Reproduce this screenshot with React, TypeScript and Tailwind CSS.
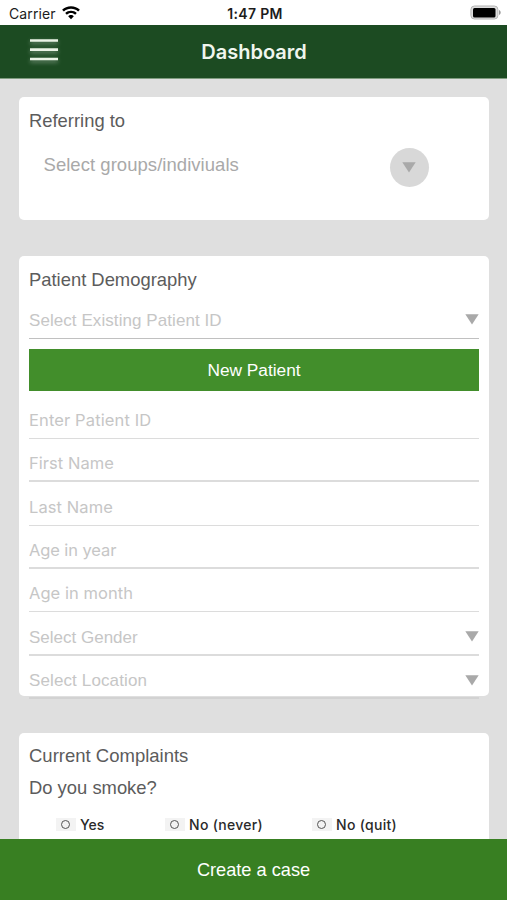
import { useState } from 'react';
import clsx from 'clsx';

const sans = "font-['Liberation_Sans',Arial,sans-serif]";
const inter = "font-['Inter',sans-serif]";

const textFields = [
  { label: 'Enter Patient ID', height: 'h-[43px] pt-[5px]', line: 'border-b border-[#dcdcdc]', tracking: 'tracking-[0.12px]' },
  { label: 'First Name', height: 'h-[43px] pt-[7px]', line: 'border-b-2 border-[#dcdcdc]', tracking: 'tracking-[0.05px]' },
  { label: 'Last Name', height: 'h-[44px] pt-[6px]', line: 'border-b border-[#dcdcdc]', tracking: 'tracking-[0.1px]' },
  { label: 'Age in year', height: 'h-[43px] pt-[6px]', line: 'border-b-2 border-[#dcdcdc]', tracking: 'tracking-[-0.1px]' },
  { label: 'Age in month', height: 'h-[43px] pt-[5px]', line: 'border-b border-[#dcdcdc]', tracking: 'tracking-[0.05px]' },
];

const smokeOptions = [
  { label: 'Yes', slot: 'ml-[27px] w-[109px]', tracking: 'tracking-[0.05px]' },
  { label: 'No (never)', slot: 'w-[147px]', tracking: 'tracking-[0.3px]' },
  { label: 'No (quit)', slot: 'w-[100px]', tracking: 'tracking-[0.3px]' },
];

function Triangle({ className }: { className?: string }) {
  return (
    <svg viewBox="0 0 14 11" className={clsx('h-[11px] w-[14px] shrink-0', className)}>
      <path d="M.3.300h13.400L7 10.600z" fill="#a9a9a9" />
    </svg>
  );
}

function StatusBar() {
  return (
    <div className={clsx('flex h-[25px] shrink-0 items-center bg-white text-[14px] leading-[25px] text-[#1c1c1c]', inter)}>
      <div className="flex flex-1 items-center pl-[9px]">
        <span className="pt-[2px] tracking-[0.12px]">Carrier</span>
        <svg viewBox="0 0 18 14" className="ml-[6px] h-[14px] w-[18px]" fill="#000">
          <path d="M9 .2C5.500.2 2.400 1.500.1 3.700L1.900 5.600C3.700 3.800 6.200 2.800 9 2.800s5.300 1 7.100 2.800l1.800-1.900C15.600 1.500 12.500.2 9 .2z" />
          <path d="M9 4.700c-2.300 0-4.300.9-5.800 2.300l1.700 1.800C6 7.700 7.400 7.100 9 7.100s3 .6 4.100 1.700L14.800 7C13.300 5.600 11.300 4.700 9 4.700z" />
          <path d="M9 9.100c-1.100 0-2.100.5-2.800 1.100L9 13.300l2.800-3.100C11.100 9.600 10.100 9.100 9 9.100z" />
        </svg>
      </div>
      <span className="pt-[2px] text-[14px] font-semibold tracking-[0.35px]">1:47 PM</span>
      <div className="flex flex-1 justify-end pr-[6px]">
        <svg viewBox="0 0 31 15" className="h-[15px] w-[31px]">
          <rect x=".9" y="1" width="27" height="13" rx="3.500" fill="#ddd" stroke="#b5b5b5" strokeWidth="1" />
          <rect x="3" y="3" width="22.500" height="9.500" rx="1.500" fill="#000" />
          <path d="M29 5v5c1.100-.4 1.700-1.400 1.700-2.500S30.100 5.400 29 5z" fill="#9a9a9a" />
        </svg>
      </div>
    </div>
  );
}

function Header({ onMenu }: { onMenu: () => void }) {
  return (
    <header className="grid h-[54px] shrink-0 grid-cols-[1fr_auto_1fr] items-center border-b border-[#7f9c80] bg-[#1c4b22]">
      <button type="button" aria-label="Menu" onClick={onMenu} className="mb-1 ml-[30px] w-[28px]">
        <svg viewBox="0 0 28 24" className="h-6 w-[28px] drop-shadow-[0_2px_2px_rgba(255,255,255,0.4)]">
          <path d="M0 2.500h28M0 11.600h28M0 21h28" stroke="#eaf3e6" strokeWidth="2.600" />
        </svg>
      </button>
      <h1 className={clsx('pt-px pl-px text-[20px] leading-6 font-semibold text-[#f0f6ee]', inter)}>Dashboard</h1>
    </header>
  );
}

function SelectRow({ label, className, text }: { label: string; className: string; text?: string }) {
  return (
    <button type="button" className={clsx('flex w-full items-center justify-between text-left', className)}>
      <span className={clsx('text-[17px] leading-5 text-[#c6c6c6]', sans, text)}>{label}</span>
      <Triangle className="mb-[2px]" />
    </button>
  );
}

export default function App() {
  const [, setMenuOpen] = useState(false);
  const [smoke, setSmoke] = useState<string | null>(null);

  return (
    <div className={clsx('flex h-[900px] w-[507px] flex-col overflow-hidden bg-[#dfdfdf]', sans)}>
      <StatusBar />
      <Header onMenu={() => setMenuOpen((v) => !v)} />

      <main className="flex min-h-0 flex-1 flex-col overflow-hidden pt-[18px] pr-[18px] pl-[19px]">
        <section className="h-[123px] shrink-0 rounded-[5px] bg-white pt-[12px] pl-[10px]">
          <h2 className="text-[18.400px] leading-6 text-[#5c5c5c]">Referring to</h2>
          <div className="mt-[14px] flex h-[40px] items-center pr-[60.500px] pl-[14.500px]">
            <span className="mb-[4px] flex-1 text-[18.500px] leading-6 tracking-[0.04px] text-[#a9a9a9]">
              Select groups/indiviuals
            </span>
            <button type="button" aria-label="Select" className="flex size-[39px] items-center justify-center rounded-full bg-[#d8d8d8]">
              <Triangle />
            </button>
          </div>
        </section>

        <section className="mt-[36px] h-[440px] shrink-0 rounded-[5px] bg-white px-[10px] pt-[12px]">
          <h2 className="text-[18.400px] leading-6 text-[#5c5c5c]">Patient Demography</h2>
          <SelectRow
            label="Select Existing Patient ID"
            text="tracking-[0.07px]"
            className="h-[47px] border-b border-[#c0c0c0] pt-[11px]"
          />
          <button type="button" className="mt-[10px] mb-[5px] block h-[42px] w-full bg-[#428e2b] text-[17.300px] leading-[43px] text-white">
            New Patient
          </button>
          {textFields.map((f) => (
            <input
              key={f.label}
              placeholder={f.label}
              className={clsx(
                'block w-full text-[16.500px] outline-none placeholder:text-[#c6c6c6]',
                inter,
                f.height,
                f.line,
                f.tracking,
              )}
            />
          ))}
          <SelectRow label="Select Gender" className="h-[44px] border-b-2 border-[#dcdcdc] pt-[9px]" />
          <SelectRow
            label="Select Location"
            text="tracking-[0.12px]"
            className="h-[43px] border-b-2 border-[#d2d2d2] pt-[9px]"
          />
        </section>

        <section className="mt-[37px] h-[140px] shrink-0 rounded-[5px] bg-white px-[10px] pt-[11px]">
          <h2 className="text-[18.500px] leading-6 text-[#5c5c5c]">Current Complaints</h2>
          <p className="mt-[8px] text-[18.400px] leading-6 text-[#5c5c5c]">Do you smoke?</p>
          <div className="mt-[16px] flex">
            {smokeOptions.map((o) => (
              <button
                key={o.label}
                type="button"
                onClick={() => setSmoke(o.label)}
                className={clsx('flex shrink-0 items-center text-left', o.slot)}
              >
                <span className="mb-px flex h-[13px] w-[20px] items-center justify-center bg-[#f3f3f3] pr-px">
                  <span
                    className={clsx(
                      'size-[9px] rounded-full border-[1.500px] border-[#555]',
                      smoke === o.label && 'bg-[#555]',
                    )}
                  />
                </span>
                <span className={clsx('ml-[4px] text-[14px] leading-[18px] font-medium text-[#2a2a2a]', inter, o.tracking)}>
                  {o.label}
                </span>
              </button>
            ))}
          </div>
        </section>
      </main>

      <button type="button" className="h-[61px] shrink-0 bg-[#387f22] text-[18.200px] leading-[63px] text-white">
        Create a case
      </button>
    </div>
  );
}
